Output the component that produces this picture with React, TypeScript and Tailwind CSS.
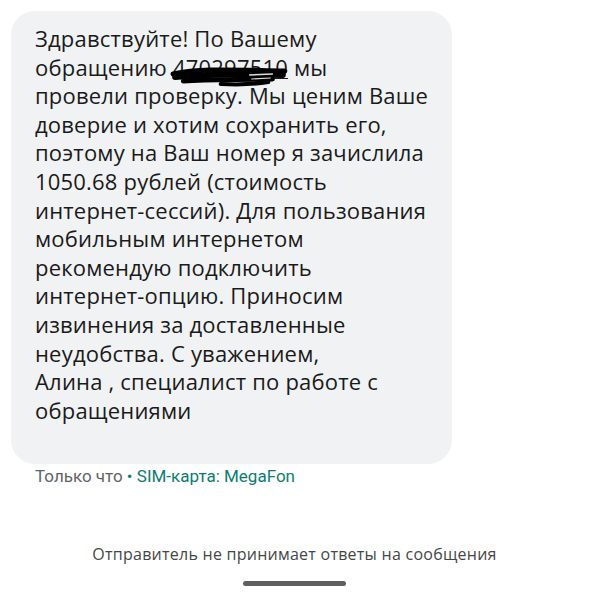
const lines: string[] = [
  "Здравствуйте! По Вашему",
  "__NUM__",
  "провели проверку. Мы ценим Ваше",
  "доверие и хотим сохранить его,",
  "поэтому на Ваш номер я зачислила",
  "1050.68 рублей (стоимость",
  "интернет-сессий). Для пользования",
  "мобильным интернетом",
  "рекомендую подключить",
  "интернет-опцию. Приносим",
  "извинения за доставленные",
  "неудобства. С уважением,",
  "Алина , специалист по работе с",
  "обращениями",
];

function Scribble() {
  return (
    <svg
      className="pointer-events-none absolute left-[-4px] top-[10px] h-[26px] w-[122px]"
      viewBox="0 0 118 26"
      fill="none"
      stroke="#000"
      strokeLinecap="round"
      preserveAspectRatio="none"
    >
      <path d="M4 12 C 30 6, 60 8, 112 9" strokeWidth="5" />
      <path d="M6 15 C 40 12, 80 12, 110 13" strokeWidth="6" />
      <path d="M14 19 C 40 17, 70 18, 100 17" strokeWidth="5" />
      <path d="M50 22 C 70 23, 85 22, 96 20" strokeWidth="4" />
      <path d="M78 13 L 100 12" stroke="#ddd" strokeWidth="1.5" />
      <path d="M80 17 L 98 16" stroke="#ddd" strokeWidth="1.2" />
    </svg>
  );
}

export default function App() {
  return (
    <div className="h-[596px] w-[589px] bg-white" style={{ fontFamily: "'Open Sans', 'Noto Sans', sans-serif" }}>
      <div className="pl-[11px] pt-[11px]">
        <div className="w-[441px] rounded-[24px] bg-[#f1f2f4] pb-[40px] pl-[24px] pt-[13px]">
          {lines.map((l, i) =>
            l === "__NUM__" ? (
              <div key={i} className="whitespace-nowrap text-[22px] leading-[28.6px] tracking-[0.2px] text-[#1a1a1a]">
                обращению{" "}
                <span className="relative underline decoration-1 underline-offset-2">
                  470297510
                  <Scribble />
                </span>{" "}
                мы
              </div>
            ) : (
              <div key={i} className="whitespace-nowrap text-[22px] leading-[28.6px] tracking-[0.2px] text-[#1a1a1a]">
                {l}
              </div>
            )
          )}
        </div>
      </div>
      <div
        className="mt-[1px] pl-[35px] text-[17px] leading-[22px] text-[#5f6368]"
        style={{ fontFamily: "Roboto, sans-serif" }}
      >
        Только что <span className="text-[#0b7d70]">• SIM-карта: MegaFon</span>
      </div>
      <div className="mt-[56px] text-center text-[16px] leading-[22px] tracking-[0.25px] text-[#444746]">
        Отправитель не принимает ответы на сообщения
      </div>
      <div className="mt-[16px] flex justify-center">
        <div className="h-[5px] w-[103px] rounded-full bg-[#5f5f5f]" />
      </div>
    </div>
  );
}
